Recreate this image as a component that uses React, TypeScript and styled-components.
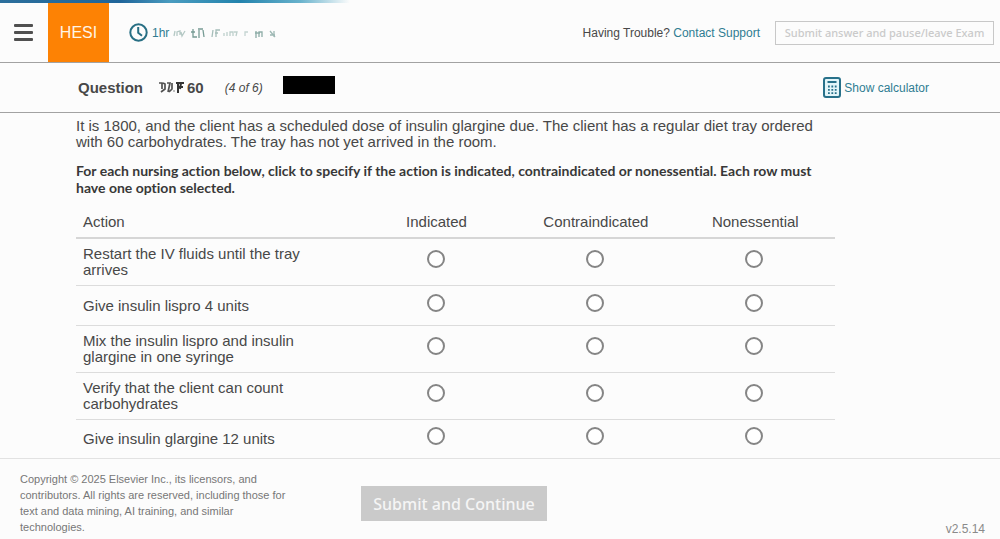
import React from "react";
import styled, { createGlobalStyle } from "styled-components";

const sans = `"Liberation Sans", Arial, sans-serif`;
const humanist = `"Noto Sans", "Open Sans", sans-serif`;
const rounded = `Lato, "Noto Sans", sans-serif`;
const teal = "#2f7c92";

const GlobalStyle = createGlobalStyle`
  *, *::before, *::after { box-sizing: border-box; }
  body { margin: 0; background: #fcfcfc; color: #484848; font-family: ${sans}; }
`;

const Page = styled.div`
  min-height: 100vh;
  display: flex;
  flex-direction: column;
`;

const TopStrip = styled.div`
  height: 3px;
  background: linear-gradient(90deg, #2c6f9c 0%, #1f659a 12%, #4a9cc0 17%, #2383ad 24%, #68b2cc 30%, #fcfcfc 35%);
`;

const Header = styled.header`
  display: flex;
  align-items: center;
  height: 60px;
  padding-right: 6px;
  border-bottom: 1px solid #a2a2a2;
`;

const MenuButton = styled.button`
  display: flex;
  flex-direction: column;
  gap: 4px;
  width: 48px;
  padding: 0 15px 0 14px;
  border: 0;
  background: none;
`;

const MenuBar = styled.span`
  height: 3px;
  border-radius: 1px;
  background: #505050;
`;

const Brand = styled.div`
  display: flex;
  align-items: center;
  justify-content: center;
  align-self: stretch;
  width: 61px;
  background: #fd8204;
  color: #fff4e6;
  font-size: 16px;
`;

const Timer = styled.div`
  display: flex;
  align-items: center;
  gap: 4px;
  margin-left: 20px;
  color: ${teal};
  font-size: 12px;
`;

const Support = styled.p`
  margin: 0 15px 0 auto;
  font-size: 12px;
`;

const Link = styled.a`
  color: ${teal};
  text-decoration: none;
`;

const PauseButton = styled.button`
  width: 219px;
  height: 24px;
  padding: 0;
  border: 1px solid #c8c8c8;
  background: none;
  color: #cacaca;
  font: 500 11px ${humanist};
`;

const QuestionBar = styled.section`
  display: flex;
  align-items: center;
  height: 50px;
  padding: 0 71px 0 78px;
  border-bottom: 1px solid #a2a2a2;
`;

const QuestionTitle = styled.h1`
  display: flex;
  align-items: center;
  gap: 3px;
  margin: 0 21px 0 0;
  font-size: 15px;
`;

const QuestionLabel = styled.span`
  margin-right: 12px;
`;

const Part = styled.em`
  margin-right: 20px;
  font-size: 12px;
`;

const Redaction = styled.span`
  width: 52px;
  height: 18px;
  margin-bottom: 5px;
  background: #000;
`;

const CalculatorButton = styled.button`
  display: flex;
  align-items: center;
  gap: 3px;
  margin-left: auto;
  padding: 0;
  border: 0;
  background: none;
  color: ${teal};
  font: 12px ${sans};
`;

const Main = styled.main`
  width: 84%;
  padding: 5px 5px 0 76px;
`;

const Scenario = styled.p`
  margin: 0;
  font-size: 15px;
  line-height: 16px;
`;

const Instruction = styled.p`
  margin: 12px 0 0;
  color: #383838;
  font: 700 14px/17px ${rounded};
  font-variant-ligatures: none;
`;

const Table = styled.table`
  width: 100%;
  margin-top: 10px;
  table-layout: fixed;
  border-collapse: separate;
  border-spacing: 0;
  font-size: 15px;
  line-height: 16px;
`;

const HeadCell = styled.th<{ $action?: boolean }>`
  width: ${({ $action }) => ($action ? "37%" : "21%")};
  height: 33px;
  padding: 0 ${({ $action }) => ($action ? "7px" : "0")};
  border-bottom: 2px solid #d6d6d6;
  font-size: 15px;
  font-weight: 400;
  text-align: ${({ $action }) => ($action ? "left" : "center")};
`;

const ActionCell = styled.th`
  height: 40px;
  padding: 7px 50px 7px 7px;
  font-weight: 400;
  text-align: left;
`;

const Row = styled.tr`
  &:not(:last-child) > * { border-bottom: 1px solid #dcdcdc; }
  &:last-child > ${ActionCell} { height: 38px; }
`;

const ChoiceCell = styled.td`
  padding: 0 2px 6px 0;
  text-align: center;
`;

const Radio = styled.input`
  appearance: none;
  display: block;
  width: 18px;
  height: 18px;
  margin: 0 auto;
  border: 2px solid #858585;
  border-radius: 50%;
  background: #fff;
  &:checked { background: ${teal}; box-shadow: inset 0 0 0 3px #fff; }
`;

const Footer = styled.footer`
  display: flex;
  flex: 1;
  padding: 12px 15px 3px 20px;
  border-top: 1px solid #e2e2e2;
`;

const Side = styled.div`
  flex: 0 0 341px;
`;

const Copyright = styled.p`
  max-width: 270px;
  margin: 0;
  color: #777;
  font-size: 11px;
  line-height: 16px;
`;

const SubmitButton = styled.button`
  width: 186px;
  height: 35px;
  margin-top: 15px;
  padding: 0;
  border: 0;
  background: #cacaca;
  color: #f5f5f5;
  font: 500 16px ${humanist};
`;

const Version = styled.p`
  flex: 1;
  align-self: flex-end;
  margin: 0;
  color: #8a8a8a;
  font-size: 12px;
  text-align: right;
`;

const ClockIcon = () => (
  <svg width="19" height="19" viewBox="0 0 19 19" fill="none" stroke="#286f84" strokeWidth="2" aria-hidden="true">
    <circle cx="9.5" cy="9.5" r="8.2" />
    <path d="M9.2 4v5.7l3.8 3" />
  </svg>
);

const CalculatorIcon = () => (
  <svg width="18" height="21" viewBox="0 0 18 21" aria-hidden="true">
    <rect x="1" y="1" width="16" height="19" rx="2" fill="#e3f5f9" stroke="#28718a" strokeWidth="2" />
    <path d="M4.5 5h9" stroke="#28718a" strokeWidth="2" />
    <path d="M5 9.5h9M5 12.8h9M5 16.1h9" stroke="#28718a" strokeWidth="1.8" strokeDasharray="1.8 1.6" />
  </svg>
);

/* Partly erased remainder of the countdown */
const ErasedTime = () => (
  <svg width="106" height="12" viewBox="0 0 106 12" fill="none" stroke="#5f8b83" strokeWidth="1.3" aria-hidden="true">
    <path d="M1 9l1-5M4 9V5l3-1v4M8 5l1 4 3-5" opacity=".45" />
    <path d="M20 2v8h4M18 5h4M25 2h5M26 3v8M30 3l1 7" opacity=".85" />
    <path d="M40 3l-1 7M43 10V3h4M42 6h3" opacity=".55" />
    <path d="M51 6v3M54 9V5M57 9V5h3v4M61 5h3l-1 4" opacity=".4" />
    <path d="M75 5h-3v4" opacity=".35" />
    <path d="M83 4v7M86 10V5h3v5M82 6h5" opacity=".7" />
    <path d="M97 4l5 6M101 4v6M97 8h5" opacity=".6" />
  </svg>
);

/* Partly erased question counter */
const ErasedCount = () => (
  <svg width="26" height="13" viewBox="0 0 26 13" fill="none" stroke="#333" aria-hidden="true">
    <path d="M1 2h3v6M5 2l2 1v5l-4 3M9 2h3l-2 9M14 2v6l-3 3" strokeWidth="1.7" opacity=".85" />
    <path d="M16 9v2" strokeWidth="1.2" opacity=".5" />
    <path d="M20 1v11M18 2h8M20 6h5M23 2l-1 6" strokeWidth="2" />
  </svg>
);

const choices = ["Indicated", "Contraindicated", "Nonessential"];

const actions = [
  "Restart the IV fluids until the tray arrives",
  "Give insulin lispro 4 units",
  "Mix the insulin lispro and insulin glargine in one syringe",
  "Verify that the client can count carbohydrates",
  "Give insulin glargine 12 units",
];

export default function App() {
  return (
    <Page>
      <GlobalStyle />
      <TopStrip />
      <Header>
        <MenuButton type="button" aria-label="Menu">
          <MenuBar />
          <MenuBar />
          <MenuBar />
        </MenuButton>
        <Brand>HESI</Brand>
        <Timer>
          <ClockIcon />
          <span>1hr</span>
          <ErasedTime />
        </Timer>
        <Support>
          Having Trouble? <Link href="#support">Contact Support</Link>
        </Support>
        <PauseButton type="button" disabled>Submit answer and pause/leave Exam</PauseButton>
      </Header>
      <QuestionBar>
        <QuestionTitle>
          <QuestionLabel>Question</QuestionLabel>
          <ErasedCount />
          <span>60</span>
        </QuestionTitle>
        <Part>(4 of 6)</Part>
        <Redaction />
        <CalculatorButton type="button">
          <CalculatorIcon />
          Show calculator
        </CalculatorButton>
      </QuestionBar>
      <Main>
        <Scenario>
          It is 1800, and the client has a scheduled dose of insulin glargine due. The client has a regular diet tray
          ordered with 60 carbohydrates. The tray has not yet arrived in the room.
        </Scenario>
        <Instruction>
          For each nursing action below, click to specify if the action is indicated, contraindicated or nonessential.
          Each row must have one option selected.
        </Instruction>
        <Table>
          <thead>
            <tr>
              <HeadCell $action scope="col">Action</HeadCell>
              {choices.map((choice) => (
                <HeadCell key={choice} scope="col">{choice}</HeadCell>
              ))}
            </tr>
          </thead>
          <tbody>
            {actions.map((action, index) => (
              <Row key={action}>
                <ActionCell scope="row">{action}</ActionCell>
                {choices.map((choice) => (
                  <ChoiceCell key={choice}>
                    <Radio type="radio" name={`action-${index}`} value={choice} aria-label={`${action}: ${choice}`} />
                  </ChoiceCell>
                ))}
              </Row>
            ))}
          </tbody>
        </Table>
      </Main>
      <Footer>
        <Side>
          <Copyright>
            Copyright © 2025 Elsevier Inc., its licensors, and contributors. All rights are reserved, including those for
            text and data mining, AI training, and similar technologies.
          </Copyright>
        </Side>
        <SubmitButton type="button" disabled>Submit and Continue</SubmitButton>
        <Version>v2.5.14</Version>
      </Footer>
    </Page>
  );
}
